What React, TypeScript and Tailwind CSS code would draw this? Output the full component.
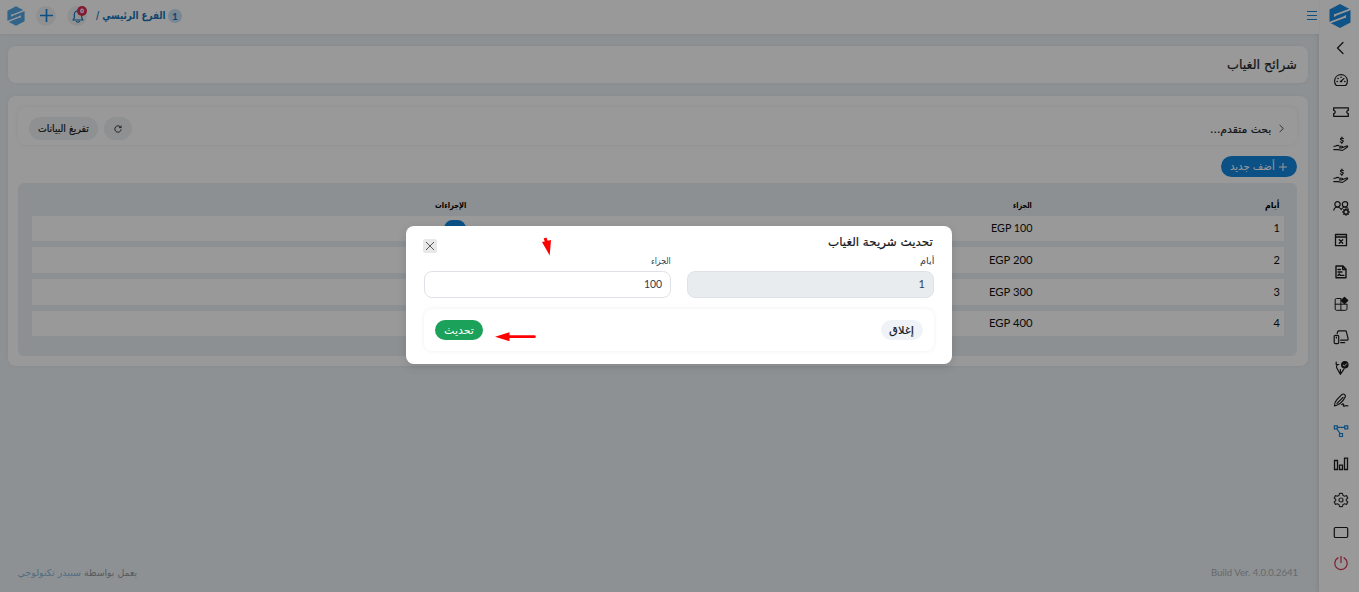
import { useLayoutEffect, useRef, useState, type ReactNode } from "react";

/* Single line of text condensed or widened to a given advance width. */
function Fit({ w, className = "", children }: { w: number; className?: string; children: ReactNode }) {
  const ref = useRef<HTMLSpanElement>(null);
  const [scale, setScale] = useState(1);
  useLayoutEffect(() => {
    if (ref.current) setScale(w / ref.current.offsetWidth);
  }, [w]);
  return (
    <span className={`block shrink-0 whitespace-nowrap ${className}`} style={{ width: w }}>
      <span ref={ref} className="inline-block origin-right" style={{ transform: `scaleX(${scale})` }}>
        {children}
      </span>
    </span>
  );
}

function Logo({ className }: { className: string }) {
  return (
    <svg viewBox="0 0 22 24" className={className}>
      <path d="M11 0 21.5 5.500v13L11 24 .5 18.500v-13z" fill="#1c8ae0" />
      <path d="M22 5 6 11.200M0 19l16-6.200" fill="none" stroke="#fff" strokeWidth="1.800" />
      <path d="M5 9.500v3.500l2.500-1.300zM17 14.500V11l-2.500 1.300z" fill="#fff" />
    </svg>
  );
}

function Icon({ children, className = "" }: { children: ReactNode; className?: string }) {
  return (
    <svg
      viewBox="0 0 16 16"
      className={`size-4 fill-none stroke-current ${className}`}
      strokeWidth="1.2"
      strokeLinecap="round"
      strokeLinejoin="round"
    >
      {children}
    </svg>
  );
}

const HandMoney = () => (
  <Icon>
    <path d="M10.300 2.600C9.400 1.800 7.500 2 7.500 3.100c0 1.400 2.700.8 2.700 2.200 0 1.200-1.900 1.400-2.900.6M8.900 1v1M8.900 6.300v1" strokeWidth="1.200" />
    <path d="M.8 10.200h1.700c1.200-1 2.800-1 4 0h2.200c1.200 0 1.100 1.700 0 1.700H6.500M10 11.500l3.500-1.600c1-.4 1.700.5.900 1.100l-4 2.900c-.6.4-1.200.5-2 .4l-3.600-.7H.8" strokeWidth="1.100" />
  </Icon>
);

function Sidebar() {
  return (
    <aside className="flex w-10 shrink-0 flex-col items-center bg-white text-[#1c1c1c] shadow-[0_0_6px_rgba(0,0,0,0.14)]">
      <div className="flex h-8 w-full items-center justify-center pl-0.5">
        <Logo className="h-6 w-[22px]" />
      </div>
      <nav className="flex w-full flex-col pl-1 [&>div]:flex [&>div]:h-8 [&>div]:shrink-0 [&>div]:items-center [&>div]:justify-center">
        <div className="pr-0.5"><Icon><path d="M11 2.500 5.500 8l5.500 5.500" /></Icon></div>
        <div>
          <Icon>
            <path d="M3.300 13.500C1.900 12.300 1.500 10.500 1.600 8.600 1.900 5.300 4.500 2.700 8 2.700s6.100 2.600 6.400 5.900c.1 1.900-.3 3.700-1.700 4.900zM8 9.200l3-2.800" />
            <path d="M4.200 9.500h.1M5 6.500h.1M8 5.200h.1M11.800 9.500h.1M7.500 9.500h1" strokeWidth="1.600" />
          </Icon>
        </div>
        <div><Icon className="-mt-px"><path d="M.7 3.800h14.600v2.500c-2 .4-2 3 0 3.400v2.600H.7V9.700c2-.4 2-3 0-3.400z" strokeWidth="1.300" /></Icon></div>
        <div><HandMoney /></div>
        <div><HandMoney /></div>
        <div>
          <svg viewBox="0 0 17 16" className="h-4 w-[17px] fill-none stroke-current" strokeWidth="1.200">
            <circle cx="4.500" cy="4.300" r="2.700" />
            <circle cx="12" cy="4.300" r="2.700" />
            <path d="M.6 10.500C1.200 8.300 2.600 7 4.500 7s2.700 1 3.700 2.400C9.200 8 10.300 7 12 7c1.500 0 2.500.6 3.300 1.600" />
            <circle cx="13" cy="12" r="2.200" strokeWidth="1.400" />
            <path d="M13 8.300v1.500M13 14.200v1.500M9.300 12h1.500M15.200 12h1.500M10.400 9.400l1 1M14.600 13.600l1 1M15.600 9.400l-1 1M11.400 13.600l-1 1" strokeWidth="1.300" />
          </svg>
        </div>
        <div><Icon><path d="M2.500 2.500h11v11.200h-11zM2.500 5h11M6.300 7.800l3.400 3.400M9.700 7.800l-3.400 3.400" strokeWidth="1.300" /></Icon></div>
        <div><Icon><path d="M3 2h7l3 3.200v8.600H3zM9.700 2v3.500H13M5 5.500h2.500M5 8h4M5 11.500l1.300-1.600 1 1.500h3.600" strokeWidth="1.400" /></Icon></div>
        <div>
          <Icon>
            <path d="M7.700 2.500H3.500A1.300 1.300 0 0 0 2.200 3.800v9.200c0 .7.6 1.300 1.300 1.300h9.200c.7 0 1.300-.6 1.300-1.300V8.500M2.200 8.200h11.600M7.900 2.500v11.800" strokeWidth="1" />
            <path d="m11.500 1.300 3.200 3.200-3.200 3.200-3.200-3.200z" className="fill-current" />
          </Icon>
        </div>
        <div>
          <Icon className="mt-0.5">
            <path d="M4.200 4.500 4.700 2.700c.2-.5.500-.8 1.100-.8h6.500c.6 0 1 .3 1.100.9l1.700 6.900c.2.900-.3 1.500-1.100 1.500H7.700M7.700 13.700h4" />
            <rect x="1.200" y="6.300" width="4.500" height="8.400" rx="1.200" />
            <path d="M3.400 8v1" />
          </Icon>
        </div>
        <div>
          <Icon>
            <path d="M3.200 2.200v2.300h2.600M4.200 4.800c-.8 1-.9 2-.5 3l3.600 6.500 3.800-5.500M7.400 14v-4.500" />
            <circle cx="11.800" cy="4.800" r="3.200" className="fill-current" />
            <path d="m10.200 5 1.200 1.100 2.200-2.300" className="stroke-white" strokeWidth="1" />
          </Icon>
        </div>
        <div>
          <Icon>
            <path d="M1.500 13.800c-.2-2.200.8-4.500 2.400-6.200l4.800-4.900c1.800-1.600 4.600 0 3.500 2.400-.9 2-2.900 4.600-5.300 6.500-1.600 1.200-3.600 2-5.400 2.200zM4 11.300l6-6M8.700 12.500c1.500-1.200 2.400-.3 1.800.7-.5 1 .6 1.400 1.800.6.900-.5 1.400.5 2.600 0" />
          </Icon>
        </div>
        <div className="text-[#1684d5]">
          <Icon className="-mt-0.5"><path d="M1.300 2.900h3v3h-3zM11.700 2.900h3v3h-3zM6.500 10.500h3v3h-3zM4.300 4.400h7.400M3.800 5.900l3.400 4.600" strokeWidth="1.200" strokeLinejoin="miter" /></Icon>
        </div>
        <div><Icon><path d="M1.500 4.500h3v9h-3zM6.500 9.200h3v4.300h-3zM11.500 2.200h3v11.300h-3z" strokeWidth="1.300" strokeLinejoin="miter" /></Icon></div>
        <div className="mt-1">
          <Icon className="text-[#333]">
            <path d="M6.600 1.300h2.800l.5 2 1.600.9 2-.6 1.300 2.400-1.500 1.400v1.200l1.500 1.400-1.300 2.400-2-.6-1.600.9-.5 2H6.600l-.5-2-1.600-.9-2 .6L1.200 10l1.500-1.400V7.400L1.200 6l1.300-2.400 2 .6 1.600-.9z" />
            <circle cx="8" cy="8" r="2" />
          </Icon>
        </div>
        <div><Icon><rect x="1.300" y="3.500" width="13.400" height="10" rx="1.200" strokeWidth="1.200" /></Icon></div>
        <div className="text-[#d52b50]"><Icon className="-mt-0.5"><path d="M5 2.900a6.200 6.200 0 1 0 6 0M8 1.300v6.200" /></Icon></div>
      </nav>
    </aside>
  );
}

function Header() {
  return (
    <header className="flex h-[34px] shrink-0 items-center justify-between bg-white pr-0.5 pl-[7px] shadow-[0_1px_3px_rgba(0,0,0,0.06)]">
      <svg viewBox="0 0 10 9" className="mt-[-3px] h-[9px] w-[10px] stroke-[#1684d5]" strokeWidth="1">
        <path d="M0 .5h10M0 4.500h10M0 8.500h10" />
      </svg>
      <div className="flex items-center pb-[3px]">
        <div className="flex size-[14px] items-center justify-center rounded-full bg-[#c9e2f6] font-[Lato] text-[10px] font-bold text-[#1674b8]">1</div>
        <Fit w={70} className="mr-0.5 -mt-px text-[11px] font-bold text-[#1674b8]">الفرع الرئيسي /</Fit>
        <div className="relative mr-[9px] flex size-5 items-center justify-center rounded-full bg-[#edf1f4]">
          <Icon className="mt-px ml-px text-[#1674b8]">
            <path d="M3 12h10l-1.300-2V6.500a3.700 3.700 0 0 0-7.400 0V10zM6.500 13.500c.7 1 2.300 1 3 0" />
          </Icon>
          <div className="absolute top-0 right-0 flex size-[10px] items-center justify-center rounded-full bg-[#d82f50] text-[6px] font-bold text-white">0</div>
        </div>
        <div className="mr-[11px] flex size-5 items-center justify-center rounded-full bg-[#edf1f4]">
          <svg viewBox="0 0 12 12" className="mb-px ml-px size-[13px] stroke-[#1684d5]" strokeWidth="1.500"><path d="M6 0v12M0 6h12" /></svg>
        </div>
        <Logo className="mr-[11px] h-5 w-[18px] opacity-75" />
      </div>
    </header>
  );
}

const rows = [
  { day: "1", amount: "EGP 100", w: 41, h: "h-[25px]" },
  { day: "2", amount: "EGP 200", w: 43, h: "h-[26px]" },
  { day: "3", amount: "EGP 300", w: 43, h: "h-[26px]" },
  { day: "4", amount: "EGP 400", w: 43, h: "h-[25px]" },
];

function SlicesTable() {
  return (
    <section className="mt-[6px] mr-px h-[173px] rounded-md bg-[#e9f0f5] pr-[13px] pl-[14px] pt-3">
      <div className="grid h-[21px] grid-cols-[248px_566px_1fr] items-center text-[8.500px] font-bold text-black">
        <Fit w={15} className="mr-1">أيام</Fit>
        <Fit w={19} className="mr-1">الجزاء</Fit>
        <Fit w={31} className="mr-1">الإجراءات</Fit>
      </div>
      <div className="flex flex-col gap-1.5">
        {rows.map((r) => (
          <div key={r.day} className={`grid ${r.h} grid-cols-[248px_566px_1fr] items-center bg-white font-[Lato] text-[11px] text-[#111]`}>
            <span className="mr-1 -mt-0.5">{r.day}</span>
            <Fit w={r.w} className="mr-1 -mt-0.5"><bdi dir="ltr">{r.amount}</bdi></Fit>
            <span className="mr-1 h-[17px] w-[22px] rounded-full bg-[#1487df]" />
          </div>
        ))}
      </div>
    </section>
  );
}

function EditDialog() {
  return (
    <div role="dialog" className="absolute top-[226px] left-[406px] flex h-[138px] w-[546px] flex-col rounded-lg bg-white px-[18px] shadow-[0_3px_10px_rgba(0,0,0,0.12)]">
      <div className="flex h-[29px] items-center justify-between pt-[3px]">
        <Fit w={105} className="mr-px text-[12px] text-[#17191c] [-webkit-text-stroke:0.2px]">تحديث شريحة الغياب</Fit>
        <button className="mt-[7px] ml-[-1px] flex size-[14px] items-center justify-center rounded-xs bg-[#e8e8e8]">
          <svg viewBox="0 0 10 10" className="size-2 stroke-[#555]" strokeWidth="1.200"><path d="m0 0 10 10M10 0 0 10" /></svg>
        </button>
      </div>
      <div className="grid grid-cols-2 gap-4">
        <label className="flex flex-col text-[9px] text-[#333b49]">
          <span className="flex h-4 items-center pb-1"><Fit w={14}>أيام</Fit></span>
          <span className="flex h-[27px] items-center rounded-lg border border-[#dfe2e6] bg-[#e8ecef] px-2 pb-0.5 font-[Lato] text-[11px]">1</span>
        </label>
        <label className="flex flex-col text-[9px] text-[#333b49]">
          <span className="flex h-4 items-center pb-1"><Fit w={20}>الجزاء</Fit></span>
          <span className="flex h-[27px] items-center rounded-lg border border-[#dfe2e6] bg-white px-2 pb-0.5 font-[Lato] text-[11px]"><Fit w={18}>100</Fit></span>
        </label>
      </div>
      <div className="mt-[11px] flex h-[42px] items-center justify-between rounded-lg px-[11px] text-[11px] shadow-[0_0_5px_rgba(0,0,0,0.07)]">
        <button className="flex h-5 w-[42px] items-center justify-center rounded-full bg-[#eff3f7] text-[#15181b]"><Fit w={25} className="[-webkit-text-stroke:0.2px]">إغلاق</Fit></button>
        <button className="flex h-5 w-12 items-center justify-center rounded-full bg-[#1ba159] text-white"><Fit w={30}>تحديث</Fit></button>
      </div>
    </div>
  );
}

export default function App() {
  return (
    <div dir="rtl" className="relative flex h-[592px] w-[1359px] overflow-hidden bg-[#edf2f5] font-['DejaVu_Sans',sans-serif] leading-none">
      <Sidebar />
      <div className="flex w-[1319px] flex-col">
        <Header />
        <main className="flex flex-1 flex-col pt-3 pr-[11px] pl-2">
          <div className="flex h-[37px] items-center rounded-lg bg-white px-[11px] text-[13px] text-[#22252a] shadow-[0_0_4px_rgba(0,0,0,0.05)]">
            <Fit w={70} className="[-webkit-text-stroke:0.2px]">شرائح الغياب</Fit>
          </div>
          <div className="mt-[13px] h-[270px] rounded-lg bg-white px-[10px] pt-[11px] shadow-[0_0_4px_rgba(0,0,0,0.05)]">
            <div className="mr-px flex h-[38px] items-center justify-between rounded-lg pr-[13px] pl-[11px] shadow-[0_0_5px_rgba(0,0,0,0.06)]">
              <div className="flex items-center pt-1.5 text-[11px] text-[#22252a]">
                <svg viewBox="0 0 6 10" className="-mt-px ml-2 h-[9px] w-[5px] fill-none stroke-[#333]"><path d="m.7.7 4.500 4.300-4.500 4.300" /></svg>
                <Fit w={61} className="mt-px [-webkit-text-stroke:0.2px]">بحث متقدم...</Fit>
              </div>
              <div className="flex gap-1.5 pt-[5px] text-[10px] text-[#17191c]">
                <button className="flex h-[23px] w-7 items-center justify-center rounded-full bg-[#edf1f2]">
                  <svg viewBox="0 0 10 10" className="size-2 fill-none stroke-[#222]" strokeWidth="1.100"><path d="M8.500 3A4 4 0 1 0 9 5.500M8.900.7v2.600H6.200" /></svg>
                </button>
                <button className="flex h-[23px] w-[69px] items-center justify-center rounded-full bg-[#edf1f2]"><Fit w={51} className="[-webkit-text-stroke:0.2px]">تفريغ البيانات</Fit></button>
              </div>
            </div>
            <button className="mt-[11px] mr-px flex h-[21px] w-[76px] items-center gap-1 rounded-full bg-[#1487df] pr-[10px] text-[11px] text-white">
              <svg viewBox="0 0 8 8" className="size-2 stroke-current"><path d="M4 0v8M0 4h8" /></svg>
              <Fit w={45}>أضف جديد</Fit>
            </button>
            <SlicesTable />
          </div>
          <footer className="mt-auto flex items-center justify-between pr-[10px] pb-[15px] pl-[9px] text-[9.500px] text-[#aaafb3]">
            <Fit w={87} className="font-[Lato]"><bdi dir="ltr">Build Ver. 4.0.0.2641</bdi></Fit>
            <div className="flex gap-[3px]">
              <Fit w={53} className="text-[#92979b]">يعمل بواسطة</Fit>
              <Fit w={64} className="text-[#86b4d8]">سبيدر تكنولوجي</Fit>
            </div>
          </footer>
        </main>
      </div>
      <div className="absolute inset-0 bg-black/40" />
      <EditDialog />
      <svg viewBox="0 0 9 19" className="absolute top-[237px] left-[542px] h-[19px] w-[9px]">
        <path d="m3 1 2 5" stroke="#f00" strokeWidth="3" />
        <path d="M0 5 9 3 7.700 18.500z" fill="#f00" />
      </svg>
      <svg viewBox="0 0 42 10" className="absolute top-[332px] left-[495px] h-[10px] w-[42px]">
        <path d="M12 4.700h27.500" stroke="#f00" strokeWidth="2.700" strokeLinecap="round" />
        <path d="M0 4.700 14.500.3v9z" fill="#f00" />
      </svg>
    </div>
  );
}
